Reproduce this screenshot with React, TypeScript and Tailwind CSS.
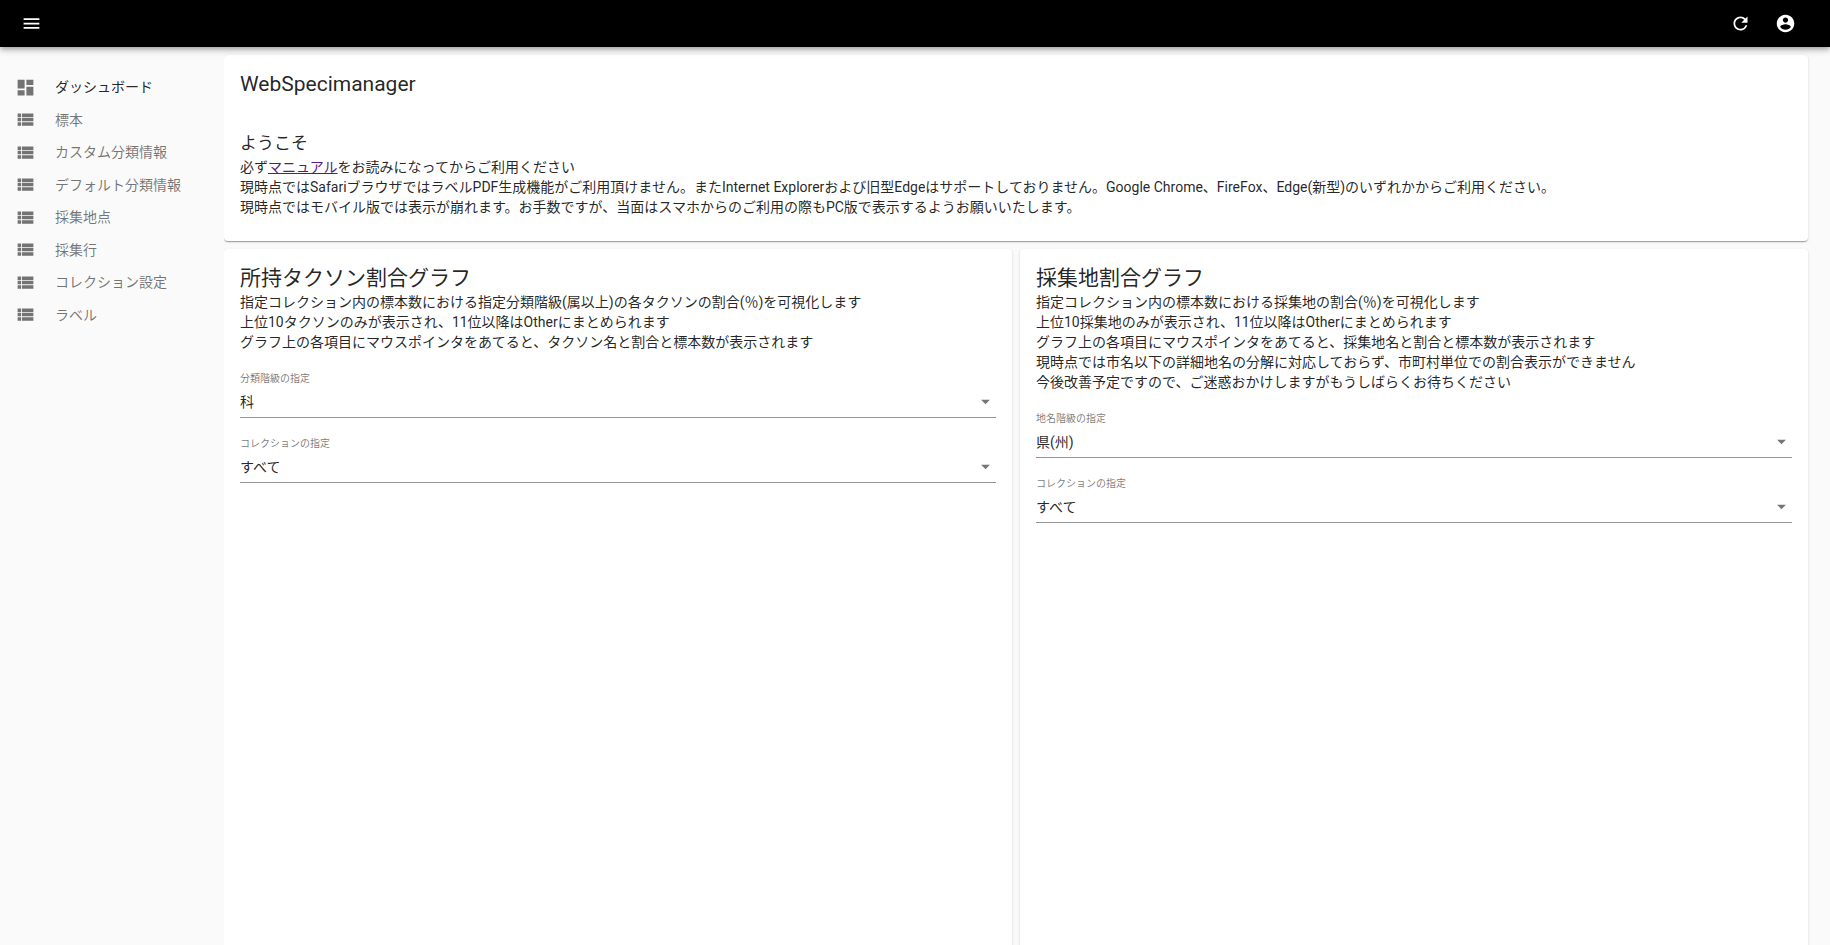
import type { ReactNode } from 'react';
import { MdArrowDropDown, MdDashboard, MdMenu, MdRefresh, MdViewList } from 'react-icons/md';

const navItems = [
  'ダッシュボード',
  '標本',
  'カスタム分類情報',
  'デフォルト分類情報',
  '採集地点',
  '採集行',
  'コレクション設定',
  'ラベル',
];

const cardShadow =
  'shadow-[0_2px_1px_-1px_rgba(0,0,0,0.2),0_1px_1px_0_rgba(0,0,0,0.14),0_1px_3px_0_rgba(0,0,0,0.12)]';

function AccountIcon() {
  return (
    <svg viewBox="0 0 24 24" className="size-[21px]" fill="currentColor" aria-hidden="true">
      <path d="M12 2C6.48 2 2 6.48 2 12s4.48 10 10 10 10-4.48 10-10S17.52 2 12 2zm0 3c1.66 0 3 1.34 3 3s-1.34 3-3 3-3-1.34-3-3 1.34-3 3-3zm0 14.2c-2.5 0-4.71-1.28-6-3.22.03-1.99 4-3.08 6-3.08 1.99 0 5.97 1.09 6 3.08-1.29 1.94-3.5 3.22-6 3.22z" />
    </svg>
  );
}

function Header() {
  return (
    <header className="z-10 flex h-[47px] shrink-0 items-center bg-black pr-[34px] pl-[21px] text-white shadow-[0_2px_4px_-1px_rgba(0,0,0,0.2),0_4px_5px_0_rgba(0,0,0,0.14),0_1px_10px_0_rgba(0,0,0,0.12)]">
      <button type="button" aria-label="メニュー">
        <MdMenu className="size-[21px]" />
      </button>
      <div className="ml-auto flex gap-6">
        <button type="button" aria-label="更新">
          <MdRefresh className="size-[21px]" />
        </button>
        <button type="button" aria-label="アカウント">
          <AccountIcon />
        </button>
      </div>
    </header>
  );
}

function Sidebar() {
  return (
    <nav className="w-[224px] shrink-0 pt-6">
      <ul className="grid h-[260px] auto-rows-fr">
        {navItems.map((label, i) => (
          <li key={label}>
            <a
              href="#"
              className={`flex h-full items-center gap-[19px] pl-[15px] ${i === 0 ? 'text-black/87' : 'text-black/54'}`}
            >
              {i === 0 ? (
                <MdDashboard className="size-[21px] text-black/54" />
              ) : (
                <MdViewList className="size-[21px]" />
              )}
              {label}
            </a>
          </li>
        ))}
      </ul>
    </nav>
  );
}

function SelectField({ id, label, options }: { id: string; label: string; options: string[] }) {
  return (
    <div className="flex h-[65px] flex-col">
      <label htmlFor={id} className="text-[10px] leading-4 text-black/54">
        {label}
      </label>
      <div className="relative border-b border-black/42">
        <select id={id} className="block h-[30px] w-full appearance-none bg-transparent pr-6 outline-none">
          {options.map((option) => (
            <option key={option}>{option}</option>
          ))}
        </select>
        <MdArrowDropDown className="pointer-events-none absolute top-1 right-0 size-[21px] text-black/54" />
      </div>
    </div>
  );
}

function ChartCard({ title, lines, children }: { title: string; lines: string[]; children: ReactNode }) {
  return (
    <section className={`min-h-[720px] flex-1 rounded bg-white p-4 ${cardShadow}`}>
      <h2 className="text-[21px] leading-[27px]">{title}</h2>
      {lines.map((line) => (
        <p key={line}>{line}</p>
      ))}
      <div className="mt-[19px]">{children}</div>
    </section>
  );
}

export default function App() {
  return (
    <div className="flex h-screen flex-col bg-[#fafafa] font-[Roboto,'Noto_Sans_CJK_JP',sans-serif] text-[14px] leading-5 text-black/87">
      <Header />
      <div className="flex min-h-0 flex-1">
        <Sidebar />
        <main className="flex min-w-0 flex-1 flex-col gap-2 overflow-y-auto pt-2 pr-[22px] [scrollbar-width:none]">
          <section className={`rounded bg-white px-4 pt-4 pb-6 ${cardShadow}`}>
            <h1 className="text-[21px] leading-[27px]">WebSpecimanager</h1>
            <h2 className="mt-8 text-[17px] leading-[27px]">ようこそ</h2>
            <p>
              必ず
              <a href="#" className="text-[#551a8b] underline">
                マニュアル
              </a>
              をお読みになってからご利用ください
            </p>
            <p>
              現時点ではSafariブラウザではラベルPDF生成機能がご利用頂けません。またInternet
              Explorerおよび旧型Edgeはサポートしておりません。Google
              Chrome、FireFox、Edge(新型)のいずれかからご利用ください。
            </p>
            <p>
              現時点ではモバイル版では表示が崩れます。お手数ですが、当面はスマホからのご利用の際もPC版で表示するようお願いいたします。
            </p>
          </section>
          <div className="flex gap-2">
            <ChartCard
              title="所持タクソン割合グラフ"
              lines={[
                '指定コレクション内の標本数における指定分類階級(属以上)の各タクソンの割合(％)を可視化します',
                '上位10タクソンのみが表示され、11位以降はOtherにまとめられます',
                'グラフ上の各項目にマウスポインタをあてると、タクソン名と割合と標本数が表示されます',
              ]}
            >
              <SelectField id="taxon-rank" label="分類階級の指定" options={['科', '属']} />
              <SelectField id="taxon-collection" label="コレクションの指定" options={['すべて']} />
            </ChartCard>
            <ChartCard
              title="採集地割合グラフ"
              lines={[
                '指定コレクション内の標本数における採集地の割合(％)を可視化します',
                '上位10採集地のみが表示され、11位以降はOtherにまとめられます',
                'グラフ上の各項目にマウスポインタをあてると、採集地名と割合と標本数が表示されます',
                '現時点では市名以下の詳細地名の分解に対応しておらず、市町村単位での割合表示ができません',
                '今後改善予定ですので、ご迷惑おかけしますがもうしばらくお待ちください',
              ]}
            >
              <SelectField id="place-rank" label="地名階級の指定" options={['県(州)', '国']} />
              <SelectField id="place-collection" label="コレクションの指定" options={['すべて']} />
            </ChartCard>
          </div>
        </main>
      </div>
    </div>
  );
}
